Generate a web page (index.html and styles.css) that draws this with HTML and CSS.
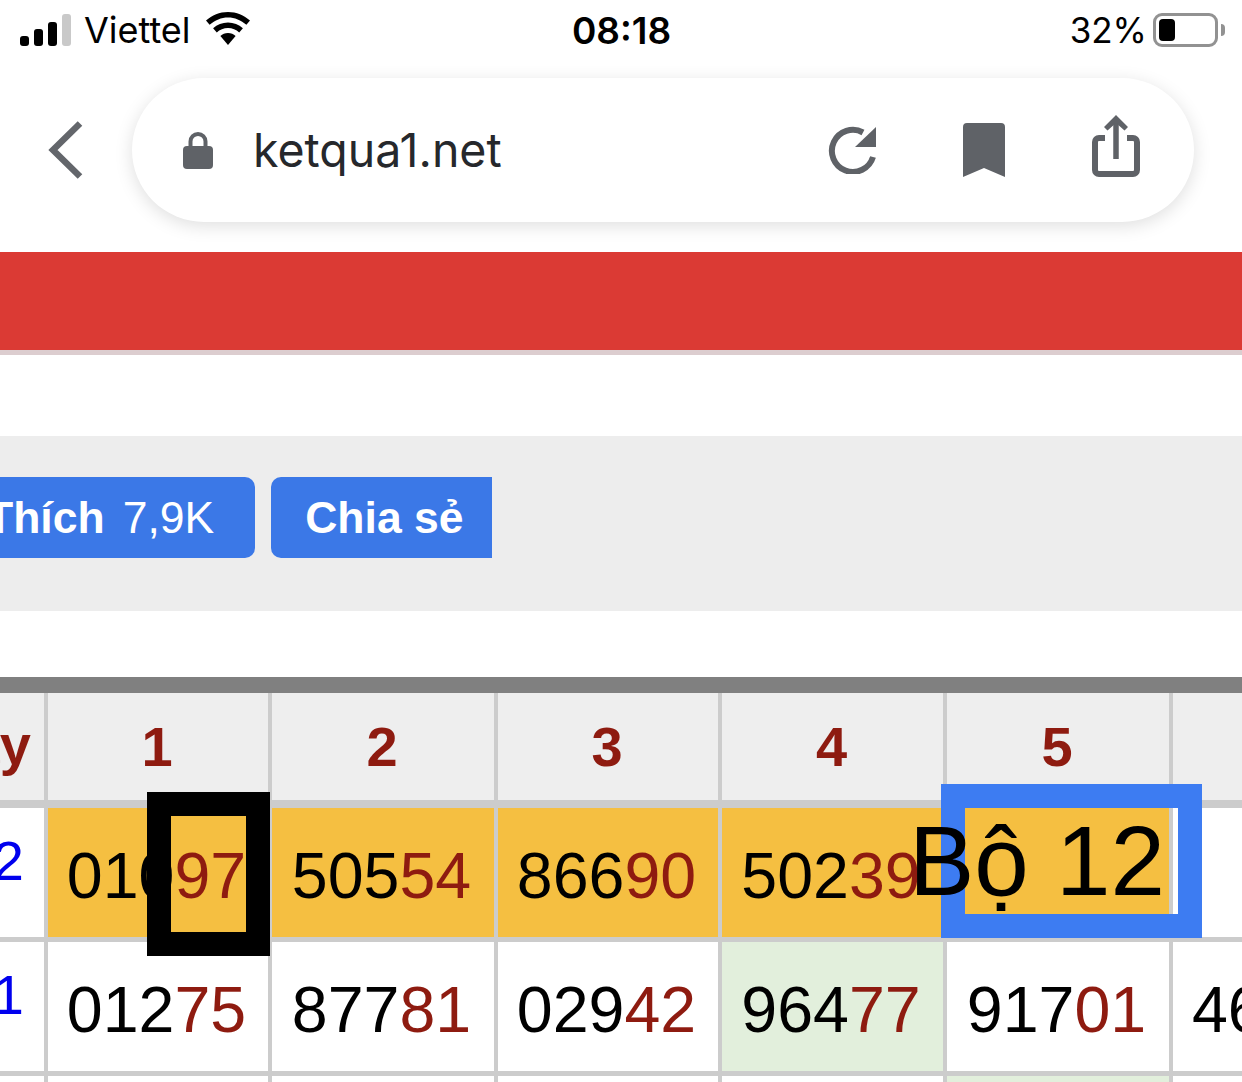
FILE: index.html
```html
<!DOCTYPE html>
<html lang="vi">
<head>
<meta charset="utf-8">
<title>ketqua1.net</title>
<link rel="stylesheet" href="styles.css">
</head>
<body>
<div class="page">
  <header class="status">
    <div class="status-left">
      <svg class="signal" width="51" height="32" viewBox="0 0 51 32"><rect x="0" y="22" width="9" height="10" rx="3" fill="#000"/><rect x="14" y="15" width="9" height="17" rx="3" fill="#000"/><rect x="28" y="8" width="9" height="24" rx="3" fill="#000"/><rect x="42" y="0" width="9" height="32" rx="3" fill="#c9c9c9"/></svg>
      <span class="carrier">Viettel</span>
      <svg class="wifi" width="44" height="33" viewBox="0 0 44 33"><path d="M22 0C13.500 0 6 3.300 0 8.500l3.600 4.200C9 8 15.200 5.400 22 5.400s13 2.600 18.400 7.300L44 8.500C38 3.300 30.500 0 22 0z" fill="#000"/><path d="M22 10.500c-5.700 0-10.800 2.100-14.900 5.700l3.700 4.200c3-2.700 6.900-4.300 11.200-4.300s8.200 1.600 11.200 4.300l3.700-4.200c-4.100-3.600-9.200-5.700-14.900-5.700z" fill="#000"/><path d="M22 21c-3 0-5.600 1.100-7.600 2.900L22 33l7.600-9.100C27.600 22.100 25 21 22 21z" fill="#000"/></svg>
    </div>
    <div class="time">08:18</div>
    <div class="status-right">
      <span class="percent">32%</span>
      <span class="battery"><span class="battery-fill"></span></span>
      <span class="battery-nub"></span>
    </div>
  </header>

  <nav class="toolbar">
    <svg class="back" width="35" height="58" viewBox="0 0 35 58"><path d="M32 2.500 5 29l27 26.500" fill="none" stroke="#63666b" stroke-width="6.500"/></svg>
    <div class="address">
      <svg class="lock" width="30" height="38" viewBox="0 0 30 38"><path d="M7.500 16V10.500a7.500 7.500 0 0 1 15 0V16" fill="none" stroke="#5f6267" stroke-width="4"/><rect x="0" y="15" width="30" height="23" rx="4" fill="#5f6267"/></svg>
      <span class="url">ketqua1.net</span>
      <div class="actions">
        <svg width="49" height="48" viewBox="0 0 49 48"><path d="M46 31A21 21 0 1 1 36 6.500" fill="none" stroke="#5f6267" stroke-width="6"/><path d="M49 1v20H28z" fill="#5f6267"/></svg>
        <svg width="42" height="54" viewBox="0 0 42 54"><path d="M4 0h34a4 4 0 0 1 4 4v50l-21-9L0 54V4a4 4 0 0 1 4-4z" fill="#5f6267"/></svg>
        <svg width="48" height="70" viewBox="0 0 48 70"><path d="M13 23H7a4 4 0 0 0-4 4v28a4 4 0 0 0 4 4h34a4 4 0 0 0 4-4V27a4 4 0 0 0-4-4h-6" fill="none" stroke="#5f6267" stroke-width="6"/><path d="M24 44V6" stroke="#5f6267" stroke-width="5.500" fill="none"/><path d="M24 0l12 12-3.500 3.500L24 8l-8.500 7.500L12 12z" fill="#5f6267"/></svg>
      </div>
    </div>
  </nav>

  <div class="redbar"></div>
  <div class="spacer-a"></div>

  <section class="social">
    <div class="btn btn-like"><b>Thích</b><span>7,9K</span></div>
    <div class="btn btn-share"><b>Chia sẻ</b></div>
  </section>

  <div class="spacer-b"></div>

  <main class="table">
    <div class="row row-head">
      <div class="cell label">Ngày</div>
      <div class="cell">1</div><div class="cell">2</div><div class="cell">3</div><div class="cell">4</div><div class="cell">5</div><div class="cell"></div>
    </div>
    <div class="row">
      <div class="cell date">02</div>
      <div class="cell num gold">010<i>97</i></div>
      <div class="cell num gold">505<i>54</i></div>
      <div class="cell num gold">866<i>90</i></div>
      <div class="cell num gold">502<i>39</i></div>
      <div class="cell num gold"></div>
      <div class="cell num"></div>
    </div>
    <div class="row">
      <div class="cell date">01</div>
      <div class="cell num">012<i>75</i></div>
      <div class="cell num">877<i>81</i></div>
      <div class="cell num">029<i>42</i></div>
      <div class="cell num green">964<i>77</i></div>
      <div class="cell num">917<i>01</i></div>
      <div class="cell num">46</div>
    </div>
    <div class="row">
      <div class="cell date"></div>
      <div class="cell num"></div>
      <div class="cell num"></div>
      <div class="cell num"></div>
      <div class="cell num"></div>
      <div class="cell num green"></div>
      <div class="cell num"></div>
    </div>
    <div class="mark mark-black"></div>
    <div class="mark mark-blue"></div>
    <div class="mark-label">Bộ 12</div>
  </main>
</div>
</body>
</html>
```
FILE: styles.css
```css
* { box-sizing: border-box; }
html, body { margin: 0; padding: 0; background: #fff; }
.page {
  width: 1242px;
  height: 1082px;
  overflow: hidden;
  font-family: "Liberation Sans", Arial, sans-serif;
  color: #000;
}

/* iOS status bar */
.status {
  height: 78px;
  display: grid;
  grid-template-columns: 1fr auto 1fr;
  padding: 0 16px 18px 20px;
  align-items: center;
  font-family: Inter, "Noto Sans", sans-serif;
  font-size: 36px;
}
.status-left { display: flex; align-items: center; }
.signal { flex: none; }
.carrier { margin-left: 13px; }
.wifi { margin-left: 15px; margin-top: -4px; }
.time { font-weight: 600; font-size: 37px; padding-right: 3px; }
.status-right { display: flex; align-items: center; justify-content: flex-end; padding-right: 1px; }
.percent { margin-right: 6px; font-size: 35px; }
.battery {
  width: 65px;
  height: 34px;
  border: 3px solid #929292;
  border-radius: 9px;
  padding: 3px;
  display: block;
}
.battery-fill {
  display: block;
  width: 16px;
  height: 100%;
  background: #000;
  border-radius: 4px;
}
.battery-nub {
  width: 4px;
  height: 12px;
  margin-left: 3px;
  background: #929292;
  border-radius: 0 6px 6px 0;
}

/* Browser toolbar */
.toolbar {
  height: 174px;
  padding: 0 48px 30px;
  display: flex;
  align-items: center;
}
.back { flex: none; margin-right: 49px; }
.address {
  width: 1062px;
  height: 144px;
  flex: none;
  border-radius: 72px;
  background: #fff;
  box-shadow: 0 4px 18px rgba(0, 0, 0, 0.13);
  display: flex;
  align-items: center;
  padding: 0 54px 0 51px;
}
.lock { flex: none; }
.url {
  margin-left: 40px;
  font-family: Inter, "Noto Sans", sans-serif;
  font-size: 46.500px;
  color: #26282c;
}
.actions { margin-left: auto; display: flex; align-items: center; gap: 87px; }

/* Page content */
.redbar {
  height: 103px;
  background: #db3a34;
  border-bottom: 5px solid #dccdcf;
}
.spacer-a { height: 81px; }
.social {
  height: 175px;
  background: #ededed;
  padding-top: 41px;
  display: flex;
  align-items: flex-start;
  gap: 16px;
  color: #fff;
  font-size: 44.500px;
}
.btn {
  height: 81px;
  background: #3b78e7;
  display: flex;
  align-items: center;
  white-space: nowrap;
}
.btn-like {
  flex: none;
  margin-left: -47px;
  padding: 0 41px 0 33px;
  border-radius: 10px;
  gap: 18px;
}
.btn-share {
  flex: none;
  padding: 0 28px 0 34px;
  border-radius: 10px 0 0 10px;
}
.spacer-b { height: 66px; }

/* Results table */
.table {
  position: relative;
  width: 1242px;
  border-top: 16px solid #808080;
}
.row {
  display: grid;
  grid-template-columns: 44px 220px 222px 220px 221px 222px 69px;
  column-gap: 4px;
  height: 134px;
  padding-bottom: 5px;
  background: #ccc;
}
.row-head { height: 115px; padding-bottom: 8px; }
.cell {
  background: #fff;
  display: flex;
  align-items: center;
  justify-content: center;
  overflow: hidden;
  white-space: nowrap;
}
.row-head .cell {
  background: #eee;
  color: #8e1b10;
  font-weight: 700;
  font-size: 56px;
  padding-right: 2px;
}
.row-head .label { justify-content: flex-end; padding-right: 13px; padding-bottom: 4px; }
.date {
  justify-content: flex-end;
  align-items: flex-start;
  color: #0000ee;
  font-size: 56px;
  padding: 20px 20px 0 0;
}
.num { font-size: 64.500px; padding: 6px 3px 0 0; }
.num:last-child { justify-content: flex-start; padding-left: 19px; }
.num i { font-style: normal; color: #8e1b10; }
.gold { background: #f5bf41; }
.green { background: #e2efdc; }

/* Annotations drawn on top of the table */
.mark { position: absolute; border-style: solid; border-width: 24px; }
.mark-black { left: 147px; top: 99px; width: 123px; height: 164px; border-color: #000; }
.mark-blue { left: 941px; top: 91px; width: 261px; height: 154px; border-color: #3d7cf2; }
.mark-label {
  position: absolute;
  left: 909px;
  top: 113px;
  font-size: 98px;
  line-height: 110px;
  white-space: nowrap;
}
```
